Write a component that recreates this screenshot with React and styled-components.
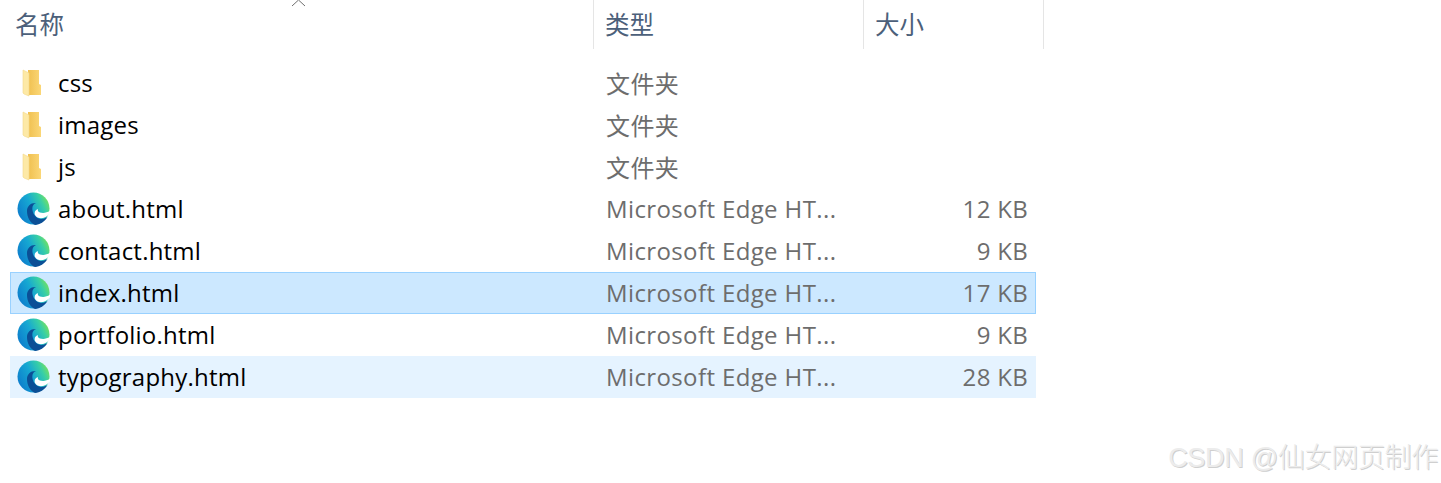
import React from 'react';
import styled, { createGlobalStyle } from 'styled-components';

const GlobalStyle = createGlobalStyle`
  html, body {
    margin: 0;
    background: #fff;
  }
  body {
    font-family: "Open Sans", "Noto Sans CJK SC", sans-serif;
  }
`;

const Page = styled.div`
  position: relative;
  width: 1441px;
  height: 483px;
  overflow: hidden;
  padding-left: 10px;
  box-sizing: border-box;
`;

const Header = styled.div`
  display: grid;
  grid-template-columns: 584px 270px 180px;
  height: 49px;
`;

const HeaderCell = styled.div`
  display: flex;
  align-items: center;
  height: 49px;
  padding-left: ${(p) => (p.$first ? '5px' : '11px')};
  padding-bottom: 3px;
  box-sizing: border-box;
  border-right: 1px solid #e5e5e5;
  font-family: "Noto Sans CJK SC", sans-serif;
  font-size: 24.5px;
  color: #4c607a;
`;

const SortArrow = styled.svg`
  position: absolute;
  left: 291px;
  top: 0;
`;

const List = styled.div`
  width: 1026px;
  margin-top: 13px;
`;

const Row = styled.div`
  display: grid;
  grid-template-columns: 595px 270px 1fr;
  align-items: center;
  height: 42px;
  padding-bottom: 2px;
  box-sizing: border-box;
  background: ${(p) => (p.$state === 'selected' ? '#cce8ff' : p.$state === 'hover' ? '#e5f3ff' : 'transparent')};
  border: 1px solid ${(p) => (p.$state === 'selected' ? '#99d1ff' : 'transparent')};
`;

const NameCell = styled.div`
  display: flex;
  align-items: center;
  padding-left: 6px;
  color: #000;
  font-size: 24px;
  letter-spacing: 0.22px;
`;

const IconSlot = styled.span`
  display: flex;
  justify-content: center;
  width: 33px;
  margin-right: 8px;
  padding-right: ${(p) => (p.$folder ? '6px' : '0')};
  padding-top: ${(p) => (p.$folder ? '1px' : '0')};
  box-sizing: border-box;
`;

const TypeCell = styled.div`
  color: #6d6d6d;
  font-size: 24px;
  letter-spacing: 0.38px;
  white-space: nowrap;
`;

const SizeCell = styled.div`
  color: #6d6d6d;
  font-size: 24px;
  letter-spacing: 0.3px;
  text-align: right;
  padding-right: 7px;
`;

const Watermark = styled.div`
  position: absolute;
  right: 3px;
  bottom: 8px;
  font-family: "Liberation Sans", "Noto Sans CJK SC", sans-serif;
  font-size: 27px;
  font-weight: 300;
  letter-spacing: -0.3px;
  color: #ececec;
  text-shadow: 1px 1px 0 #cfcfcf;
  white-space: nowrap;
`;

function FolderIcon() {
  return (
    <svg width="26" height="28" viewBox="0 0 26 28">
      <defs>
        <linearGradient id="folderBack" x1="0" y1="0" x2="1" y2="0">
          <stop offset="0" stopColor="#f0c050" />
          <stop offset="1" stopColor="#fbd777" />
        </linearGradient>
      </defs>
      <path d="M10 1h11v14l2 1v10H10z" fill="url(#folderBack)" />
      <path d="M5 1l6 3v23l-5-2-1-1z" fill="#fde9a6" stroke="#f3d98c" strokeWidth="0.6" />
    </svg>
  );
}

function EdgeIcon({ id }) {
  return (
    <svg width="33" height="33" viewBox="0 0 33 33">
      <defs>
        <linearGradient id={`${id}-disc`} x1="0" y1="0.8" x2="1" y2="0.3">
          <stop offset="0" stopColor="#0c78cc" />
          <stop offset="0.5" stopColor="#16a8d2" />
          <stop offset="0.8" stopColor="#38cfa6" />
          <stop offset="1" stopColor="#76e05f" />
        </linearGradient>
      </defs>
      <circle cx="16.500" cy="16.500" r="16" fill={`url(#${id}-disc)`} />
      <path d="M10 19C10 14 14 10.500 19 11 16 12 15 15 15.500 18.500 16.200 23 20.500 27.500 25 27 27 26.800 29 26 30.500 25 27.500 30 23 32.500 18 33 13 31 10 25 10 19z" fill="#0b4f96" />
      <path d="M33.500 18.500C30 21 26 21.500 23 20.500 21 19.800 20.500 18.500 21 17 18 18 17 20.500 18 23 19.500 26 23 26.500 26 26 29 25.200 31.500 23.500 33.500 20.500z" fill="#fff" />
    </svg>
  );
}

const rows = [
  { name: 'css', type: '文件夹', icon: 'folder' },
  { name: 'images', type: '文件夹', icon: 'folder' },
  { name: 'js', type: '文件夹', icon: 'folder' },
  { name: 'about.html', type: 'Microsoft Edge HT...', size: '12 KB', icon: 'edge' },
  { name: 'contact.html', type: 'Microsoft Edge HT...', size: '9 KB', icon: 'edge' },
  { name: 'index.html', type: 'Microsoft Edge HT...', size: '17 KB', icon: 'edge', state: 'selected' },
  { name: 'portfolio.html', type: 'Microsoft Edge HT...', size: '9 KB', icon: 'edge' },
  { name: 'typography.html', type: 'Microsoft Edge HT...', size: '28 KB', icon: 'edge', state: 'hover' },
];

export default function App() {
  return (
    <Page>
      <GlobalStyle />
      <Header>
        <HeaderCell $first>名称</HeaderCell>
        <HeaderCell>类型</HeaderCell>
        <HeaderCell>大小</HeaderCell>
      </Header>
      <SortArrow width="16" height="8" viewBox="0 0 16 8">
        <path d="M1 6l6.500-6L14 6" fill="none" stroke="#6f6f6f" strokeWidth="1" />
      </SortArrow>
      <List>
        {rows.map((r) => (
          <Row key={r.name} $state={r.state}>
            <NameCell>
              <IconSlot $folder={r.icon === 'folder'}>
                {r.icon === 'folder' ? <FolderIcon /> : <EdgeIcon id={r.name.replace('.', '-')} />}
              </IconSlot>
              {r.name}
            </NameCell>
            <TypeCell>{r.type}</TypeCell>
            <SizeCell>{r.size}</SizeCell>
          </Row>
        ))}
      </List>
      <Watermark>CSDN @仙女网页制作</Watermark>
    </Page>
  );
}
